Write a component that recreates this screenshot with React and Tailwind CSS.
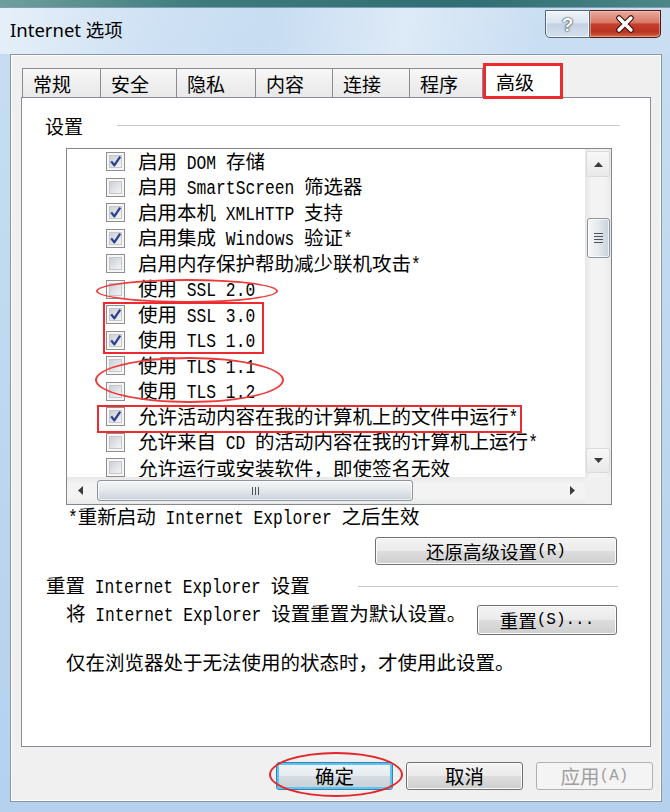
import React from "react";

function Mix({ text }) {
  const parts = text.match(/[\x00-\x7F]+|[^\x00-\x7F]+/g) || [];
  return parts.map((p, i) =>
    /^[\x00-\x7F]/.test(p) ? (
      <span
        key={i}
        className="inline-block scale-y-[1.22] origin-[50%_78%] [font-family:'Liberation_Mono',monospace] text-[16.3px] whitespace-pre"
      >
        {p}
      </span>
    ) : (
      <span key={i}>{p}</span>
    )
  );
}

function Box({ on }) {
  return (
    <svg width="19" height="19" viewBox="0 0 19 19" className="shrink-0">
      <defs>
        <linearGradient id="cbg" x1="0" y1="0" x2="1" y2="1">
          <stop offset="0" stopColor="#c9cdd3" />
          <stop offset="1" stopColor="#f7f7f7" />
        </linearGradient>
      </defs>
      <rect x="0.5" y="0.5" width="18" height="18" fill="#f6f6f6" stroke="#8f8f8f" />
      <rect x="3.5" y="3.5" width="12" height="12" fill="url(#cbg)" stroke="#c4c7cc" />
      {on && (
        <path d="M5.2 9.4 L8.3 13.3 L14.2 4.6" fill="none" stroke="#2d4191" strokeWidth="2.3" strokeLinejoin="round" />
      )}
    </svg>
  );
}

const rows = [
  [true, "启用 DOM 存储"],
  [false, "启用 SmartScreen 筛选器"],
  [true, "启用本机 XMLHTTP 支持"],
  [true, "启用集成 Windows 验证*"],
  [false, "启用内存保护帮助减少联机攻击*"],
  [false, "使用 SSL 2.0"],
  [true, "使用 SSL 3.0"],
  [true, "使用 TLS 1.0"],
  [false, "使用 TLS 1.1"],
  [false, "使用 TLS 1.2"],
  [true, "允许活动内容在我的计算机上的文件中运行*"],
  [false, "允许来自 CD 的活动内容在我的计算机上运行*"],
  [false, "允许运行或安装软件，即使签名无效"],
];

const tabs = [
  ["常规", "w-[78px]"],
  ["安全", "w-[76px]"],
  ["隐私", "w-[79px]"],
  ["内容", "w-[77px]"],
  ["连接", "w-[77px]"],
  ["程序", "w-[74px]"],
];

const btn =
  "flex items-center justify-center rounded-[3px] border border-[#707070] bg-[linear-gradient(#f3f3f3_0%,#ebebeb_49%,#dddddd_50%,#cfcfcf_100%)] shadow-[inset_0_0_0_1px_#fbfbfb]";

function ScrollBtn({ children, className = "" }) {
  return (
    <div
      className={
        "flex items-center justify-center rounded-[2px] border border-[#dadada] bg-[linear-gradient(#f7f7f7,#e9e9e9)] " +
        className
      }
    >
      {children}
    </div>
  );
}

export default function App() {
  return (
    <div className="relative w-[670px] h-[812px] overflow-hidden flex flex-col bg-[linear-gradient(to_bottom,#c8ddf2,#b5d1ee)] text-black [font-family:'Noto_Sans_CJK_SC',sans-serif]">
      {/* desktop strip */}
      <div className="h-[7px] bg-[linear-gradient(to_right,#6f9f9c,#3e7b7d_30%,#2f6e73_70%,#4d8686)]" />
      {/* title bar */}
      <div className="h-[47px] flex items-start border-t border-[#7f9db8] bg-[linear-gradient(100deg,rgba(255,255,255,0.55)_0%,rgba(255,255,255,0.15)_22%,rgba(255,255,255,0)_40%,rgba(255,255,255,0.4)_60%,rgba(255,255,255,0.05)_80%)]">
        <div className="pl-[10px] pt-[10px] text-[18.5px] leading-[24px] [font-family:'Noto_Sans','Noto_Sans_CJK_SC',sans-serif]">
          Internet 选项
        </div>
        <div className="ml-auto mr-[9px] mt-[2px] flex">
          <div className="w-[45px] h-[28px] rounded-bl-[5px] border border-[#56657a] bg-[linear-gradient(#eef3f9_0%,#dbe5f1_45%,#c3d1e2_50%,#d3e0ee_100%)] shadow-[inset_0_0_0_1px_rgba(255,255,255,0.7)] flex items-center justify-center">
            <span className="text-white font-bold text-[19px] leading-none [font-family:'Liberation_Sans',sans-serif] [text-shadow:0_0_1px_#1c2633,0_0_2px_#1c2633]">
              ?
            </span>
          </div>
          <div className="w-[71px] h-[28px] rounded-br-[5px] border border-l-0 border-[#4d1b16] bg-[linear-gradient(#e9a99b_0%,#d97866_45%,#c7402f_50%,#b93220_80%,#d36a4a_100%)] shadow-[inset_0_0_0_1px_rgba(255,220,210,0.45)] flex items-center justify-center">
            <svg width="24" height="18" viewBox="0 0 24 18">
              <path d="M6 3 L18 15 M18 3 L6 15" stroke="#3a1510" strokeWidth="5.6" strokeLinecap="round" />
              <path d="M6 3 L18 15 M18 3 L6 15" stroke="#ffffff" strokeWidth="3.4" strokeLinecap="round" />
            </svg>
          </div>
        </div>
      </div>

      {/* client area */}
      <div className="ml-[10px] mr-[8px] h-[748px] border border-[#8796a8] bg-[#f0f0f0] shadow-[inset_0_0_0_1px_#ffffff] flex flex-col px-[10px] pt-[9px] pb-[11px]">
        {/* tabs */}
        <div className="h-[33px] flex items-end pl-[1px] text-[19px] leading-none">
          {tabs.map(([t, w], i) => (
            <div
              key={t}
              className={
                w +
                " h-[29px] border-t border-l border-[#898c95] bg-[linear-gradient(#f7f7f7,#e8e8e8)] flex items-center pl-[10px]" +
                (i === 5 ? " border-r" : "")
              }
            >
              {t}
            </div>
          ))}
          <div className="relative z-10 -mb-px w-[80px] h-[34px] border-t border-l border-r border-[#898c95] bg-white flex items-center pl-[12px]">
            高级
          </div>
        </div>

        {/* panel */}
        <div className="h-[650px] border border-[#898c95] bg-white flex flex-col text-[19.5px]">
          <div className="mt-[14px] h-[26px] flex items-center pl-[23px]">
            <span className="text-[19px] leading-none">设置</span>
            <div className="ml-[34px] w-[503px] h-px bg-[#c9c9c9]" />
          </div>

          {/* list */}
          <div className="mt-[10px] ml-[44px] w-[546px] h-[357px] border border-[#828790] flex flex-col">
            <div className="h-[328px] flex">
              <div className="flex-1 overflow-hidden">
                {rows.map(([on, t], i) => (
                  <div key={i} className="h-[25.5px] flex items-center pl-[39px] shrink-0">
                    <Box on={on} />
                    <span className="ml-[13px] leading-none whitespace-nowrap">
                      <Mix text={t} />
                    </span>
                  </div>
                ))}
              </div>
              {/* vertical scrollbar */}
              <div className="w-[26px] flex flex-col items-center bg-[linear-gradient(to_right,#e6e6e6,#f3f3f3_25%,#f3f3f3_75%,#e9e9e9)]">
                <ScrollBtn className="mt-[2px] w-[24px] h-[26px]">
                  <svg width="9" height="5" viewBox="0 0 9 5">
                    <path d="M0 5 L4.5 0 L9 5Z" fill="#3b3b3b" />
                  </svg>
                </ScrollBtn>
                <div className="mt-[41px] w-[23px] h-[40px] rounded-[3px] border border-[#8f959c] bg-[linear-gradient(to_right,#f6f7f8,#e4e8ec_50%,#c9d1da)] shadow-[inset_0_0_0_1px_rgba(255,255,255,0.7)] flex flex-col items-center justify-center gap-[2px]">
                  <div className="w-[9px] h-px bg-[#4e5459]" />
                  <div className="w-[9px] h-px bg-[#4e5459]" />
                  <div className="w-[9px] h-px bg-[#4e5459]" />
                  <div className="w-[9px] h-px bg-[#4e5459]" />
                </div>
                <div className="flex-1" />
                <ScrollBtn className="mb-[4px] w-[24px] h-[25px]">
                  <svg width="9" height="5" viewBox="0 0 9 5">
                    <path d="M0 0 L4.5 5 L9 0Z" fill="#3b3b3b" />
                  </svg>
                </ScrollBtn>
              </div>
            </div>
            {/* horizontal scrollbar */}
            <div className="h-[27px] flex">
              <div className="flex-1 flex items-center bg-[linear-gradient(#e8e8e8,#f3f3f3_25%,#f3f3f3_75%,#e9e9e9)]">
                <div className="w-[26px] h-full flex items-center justify-center">
                  <svg width="5" height="9" viewBox="0 0 5 9">
                    <path d="M5 0 L0 4.5 L5 9Z" fill="#3b3b3b" />
                  </svg>
                </div>
                <div className="ml-[4px] w-[316px] h-[21px] rounded-[3px] border border-[#8f959c] bg-[linear-gradient(#f6f7f8,#e4e8ec_50%,#c9d1da)] shadow-[inset_0_0_0_1px_rgba(255,255,255,0.7)] flex items-center justify-center gap-[2px]">
                  <div className="w-px h-[8px] bg-[#4e5459]" />
                  <div className="w-px h-[8px] bg-[#4e5459]" />
                  <div className="w-px h-[8px] bg-[#4e5459]" />
                </div>
                <div className="flex-1" />
                <div className="w-[26px] h-full flex items-center justify-center">
                  <svg width="5" height="9" viewBox="0 0 5 9">
                    <path d="M0 0 L5 4.5 L0 9Z" fill="#3b3b3b" />
                  </svg>
                </div>
              </div>
              <div className="w-[26px] bg-[#f0f0f0]" />
            </div>
          </div>

          <div className="ml-[46px] h-[24px] flex items-center leading-none whitespace-nowrap">
            <span>
              <Mix text="*重新启动 Internet Explorer 之后生效" />
            </span>
          </div>

          <div className={"mt-[8px] ml-[353px] w-[242px] h-[28px] text-[18.5px] leading-none " + btn}>
            还原高级设置
            <span className="[font-family:'Liberation_Mono',monospace] text-[16px]">(R)</span>
          </div>

          <div className="mt-[9px] h-[24px] flex items-center pl-[24px]">
            <span className="leading-none whitespace-nowrap">
              <Mix text="重置 Internet Explorer 设置" />
            </span>
            <div className="ml-auto mr-[32px] w-[260px] h-px bg-[#c9c9c9]" />
          </div>

          <div className="mt-[4px] flex items-start">
            <div className="ml-[44px] h-[24px] flex items-center leading-none whitespace-nowrap">
              <span>
                <Mix text="将 Internet Explorer 设置重置为默认设置。" />
              </span>
            </div>
            <div className={"ml-auto mr-[33px] mt-[3px] w-[140px] h-[30px] text-[18.5px] leading-none " + btn}>
              重置
              <span className="[font-family:'Liberation_Mono',monospace] text-[16px] whitespace-pre">(S)...</span>
            </div>
          </div>

          <div className="mt-[15px] ml-[44px] h-[24px] flex items-center leading-none whitespace-nowrap">
            仅在浏览器处于无法使用的状态时，才使用此设置。
          </div>
        </div>

        {/* dialog buttons */}
        <div className="mt-[15px] -mr-[2px] flex justify-end gap-[13px] text-[19.5px] leading-none">
          <div className="w-[117px] h-[28px] flex items-center justify-center rounded-[3px] border border-[#3c7fb1] bg-[linear-gradient(#f0f4f7_0%,#e6ebef_49%,#d6dde2_50%,#c8d0d6_100%)] shadow-[inset_0_0_0_2px_#5cc6f0]">
            确定
          </div>
          <div className={"w-[117px] h-[28px] " + btn}>取消</div>
          <div className="w-[117px] h-[28px] flex items-center justify-center rounded-[3px] border border-[#adb2b5] bg-[#f4f4f4] text-[#a0a0a0]">
            应用
            <span className="[font-family:'Liberation_Mono',monospace] text-[16px]">(A)</span>
          </div>
        </div>
      </div>

      {/* red annotations */}
      <div className="absolute left-[483px] top-[63px] w-[80px] h-[36px] border-[3px] border-[#ec2a2f] z-20" />
      <div className="absolute left-[96px] top-[279px] w-[182px] h-[24px] rounded-[50%] border-2 border-[#ec3b3b]" />
      <div className="absolute left-[103px] top-[302px] w-[161px] h-[52px] border-2 border-[#ec2a2f]" />
      <div className="absolute left-[95px] top-[357px] w-[189px] h-[46px] rounded-[50%] border-2 border-[#ec3b3b]" />
      <div className="absolute left-[97px] top-[405px] w-[425px] h-[28px] border-2 border-[#ec2a2f]" />
      <div className="absolute left-[269px] top-[752px] w-[134px] h-[45px] rounded-[50%] border-[2.5px] border-[#e3262b]" />
    </div>
  );
}
